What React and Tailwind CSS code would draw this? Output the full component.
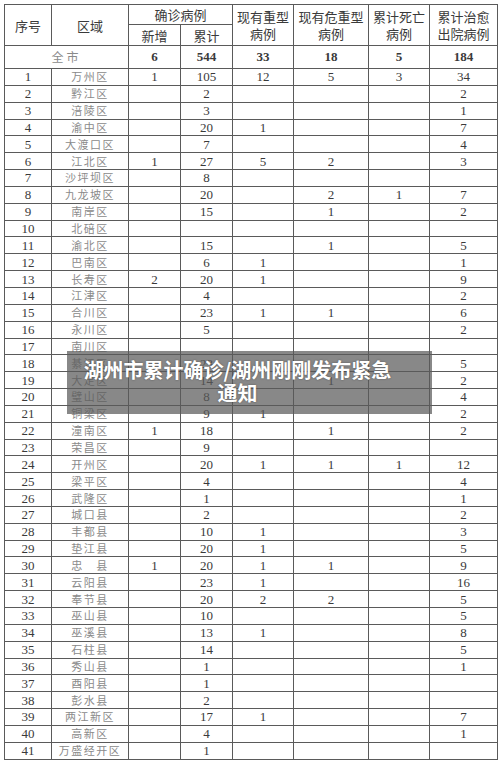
import React from "react";

const rows = [
  [1, "万州区", "1", "105", "12", "5", "3", "34"],
  [2, "黔江区", "", "2", "", "", "", "2"],
  [3, "涪陵区", "", "3", "", "", "", "1"],
  [4, "渝中区", "", "20", "1", "", "", "7"],
  [5, "大渡口区", "", "7", "", "", "", "4"],
  [6, "江北区", "1", "27", "5", "2", "", "3"],
  [7, "沙坪坝区", "", "8", "", "", "", ""],
  [8, "九龙坡区", "", "20", "", "2", "1", "7"],
  [9, "南岸区", "", "15", "", "1", "", "2"],
  [10, "北碚区", "", "", "", "", "", ""],
  [11, "渝北区", "", "15", "", "1", "", "5"],
  [12, "巴南区", "", "6", "1", "", "", "1"],
  [13, "长寿区", "2", "20", "1", "", "", "9"],
  [14, "江津区", "", "4", "", "", "", "2"],
  [15, "合川区", "", "23", "1", "1", "", "6"],
  [16, "永川区", "", "5", "", "", "", "2"],
  [17, "南川区", "", "", "", "", "", ""],
  [18, "綦江区", "", "23", "", "", "", "5"],
  [19, "大足区", "", "14", "", "1", "", "2"],
  [20, "璧山区", "", "8", "", "", "", "4"],
  [21, "铜梁区", "", "9", "1", "", "", "2"],
  [22, "潼南区", "1", "18", "", "1", "", "2"],
  [23, "荣昌区", "", "9", "", "", "", ""],
  [24, "开州区", "", "20", "1", "1", "1", "12"],
  [25, "梁平区", "", "4", "", "", "", "4"],
  [26, "武隆区", "", "1", "", "", "", "1"],
  [27, "城口县", "", "2", "", "", "", "2"],
  [28, "丰都县", "", "10", "1", "", "", "3"],
  [29, "垫江县", "", "20", "1", "", "", "5"],
  [30, "忠\u3000县", "1", "20", "1", "1", "", "9"],
  [31, "云阳县", "", "23", "1", "", "", "16"],
  [32, "奉节县", "", "20", "2", "2", "", "5"],
  [33, "巫山县", "", "10", "", "", "", "5"],
  [34, "巫溪县", "", "13", "1", "", "", "8"],
  [35, "石柱县", "", "14", "", "", "", "5"],
  [36, "秀山县", "", "1", "", "", "", "1"],
  [37, "酉阳县", "", "1", "", "", "", ""],
  [38, "彭水县", "", "2", "", "", "", ""],
  [39, "两江新区", "", "17", "1", "", "", "7"],
  [40, "高新区", "", "4", "", "", "", "1"],
  [41, "万盛经开区", "", "1", "", "", "", ""],
];

const serif = { fontFamily: '"Liberation Serif", "Times New Roman", serif' };
const sans = { fontFamily: '"Noto Sans CJK SC", "Noto Sans", sans-serif' };

const bd = "border border-[#5a5a5a]";

export default function App() {
  return (
    <div className="relative w-[500px] h-[766px] bg-white overflow-hidden pl-[4px] pt-[4px]">
      <table className="table-fixed border-collapse w-[493px] text-center text-[#3a3a3a]">
        <colgroup>
          <col className="w-[47px]" />
          <col className="w-[77px]" />
          <col className="w-[52px]" />
          <col className="w-[52px]" />
          <col className="w-[61px]" />
          <col className="w-[75px]" />
          <col className="w-[61px]" />
          <col className="w-[68px]" />
        </colgroup>
        <thead style={sans} className="text-[13px] leading-[17px] font-normal">
          <tr className="h-[20px]">
            <th rowSpan={2} className={`${bd} font-normal p-0`}>序号</th>
            <th rowSpan={2} className={`${bd} font-normal p-0`}>区域</th>
            <th colSpan={2} className={`${bd} font-normal p-0`}>确诊病例</th>
            <th rowSpan={2} className={`${bd} font-normal p-0`}>现有重型<br />病例</th>
            <th rowSpan={2} className={`${bd} font-normal p-0`}>现有危重型<br />病例</th>
            <th rowSpan={2} className={`${bd} font-normal p-0`}>累计死亡<br />病例</th>
            <th rowSpan={2} className={`${bd} font-normal p-0`}>累计治愈<br />出院病例</th>
          </tr>
          <tr className="h-[21px]">
            <th className={`${bd} font-normal p-0`}>新增</th>
            <th className={`${bd} font-normal p-0`}>累计</th>
          </tr>
        </thead>
        <tbody>
          <tr className="h-[23px]">
            <td colSpan={2} className={`${bd} p-0 text-[12px] tracking-[3px] text-[#8a8a8a]`} style={sans}>全市</td>
            {["6", "544", "33", "18", "5", "184"].map((v, i) => (
              <td key={i} className={`${bd} p-0 text-[13px] font-bold`} style={serif}>{v}</td>
            ))}
          </tr>
          {rows.map((r) => (
            <tr key={r[0]} className="h-[16.85px]">
              <td className={`${bd} p-0 text-[13px] leading-[15px]`} style={serif}>{r[0]}</td>
              <td className={`${bd} p-0 text-[11px] leading-[15px] tracking-[1.5px] text-[#8a8a8a]`} style={sans}>{r[1]}</td>
              {r.slice(2).map((v, i) => (
                <td key={i} className={`${bd} p-0 text-[13px] leading-[15px]`} style={serif}>{v}</td>
              ))}
            </tr>
          ))}
        </tbody>
      </table>

      <div
        className="absolute left-[67px] top-[351px] w-[365px] h-[63px] bg-[rgba(90,90,90,0.72)] pl-[8px] pr-[32px] pt-[7px] text-center text-white font-bold text-[20px] leading-[23px]"
        style={{ ...sans, textShadow: "0 0 2px rgba(0,0,0,0.4)" }}
      >
        湖州市累计确诊/湖州刚刚发布紧急通知
      </div>
    </div>
  );
}
